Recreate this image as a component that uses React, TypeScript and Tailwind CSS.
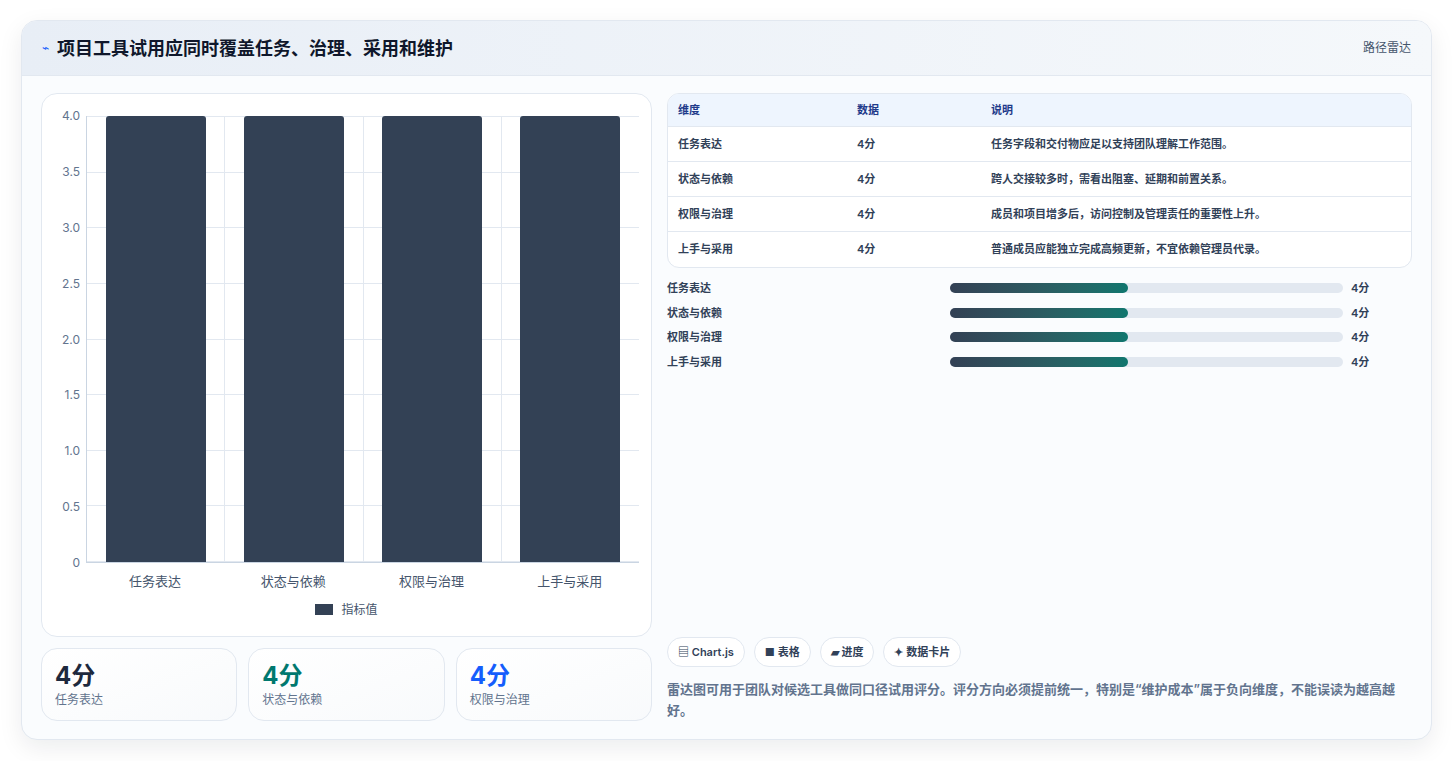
const dims = [
  { name: '任务表达', value: 4, note: '任务字段和交付物应足以支持团队理解工作范围。' },
  { name: '状态与依赖', value: 4, note: '跨人交接较多时，需看出阻塞、延期和前置关系。' },
  { name: '权限与治理', value: 4, note: '成员和项目增多后，访问控制及管理责任的重要性上升。' },
  { name: '上手与采用', value: 4, note: '普通成员应能独立完成高频更新，不宜依赖管理员代录。' },
];

const ticks = ['4.0', '3.5', '3.0', '2.5', '2.0', '1.5', '1.0', '0.5', '0'];

function BarChart() {
  return (
    <div className="flex h-[544px] flex-col rounded-2xl border border-slate-200 bg-white px-3 pt-[22px] pb-4">
      <div className="flex h-[447px]">
        <div className="flex w-[32px] flex-col justify-between text-right text-[12px] leading-none text-slate-500">
          {ticks.map((t) => (
            <span key={t} className="-my-[6px] pr-[6px]">{t}</span>
          ))}
        </div>
        <div className="relative flex-1 border-b border-l border-slate-300">
          <div className="absolute inset-0 flex flex-col justify-between">
            {ticks.map((t) => (
              <div key={t} className="h-px bg-slate-200" />
            ))}
          </div>
          <div className="absolute inset-0 flex">
            {dims.map((d, i) => (
              <div key={d.name} className={`flex flex-1 items-end justify-center ${i > 0 ? 'border-l border-slate-200' : ''}`}>
                <div className="h-full w-[100px] rounded-t-[3px] bg-[#334155]" />
              </div>
            ))}
          </div>
        </div>
      </div>
      <div className="ml-[32px] flex pt-[9px] text-[13px] text-slate-600">
        {dims.map((d) => (
          <div key={d.name} className="flex-1 text-center">{d.name}</div>
        ))}
      </div>
      <div className="mt-[9px] flex items-center justify-center gap-2 text-[12px] text-slate-600">
        <span className="h-[11px] w-[18px] bg-[#334155]" />
        指标值
      </div>
    </div>
  );
}

function Stat({ value, label, color }: { value: string; label: string; color: string }) {
  return (
    <div className="flex h-[73px] flex-1 flex-col justify-center rounded-2xl border border-slate-200 bg-gradient-to-br from-white to-slate-50 px-[13px]">
      <div className={`text-[24px] font-bold leading-tight ${color}`}>{value}</div>
      <div className="text-[12px] text-slate-500">{label}</div>
    </div>
  );
}

export default function App() {
  return (
    <div
      className="min-h-screen bg-white px-[21px] pt-[20px]"
      style={{ fontFamily: 'Inter, "Noto Sans CJK SC", sans-serif' }}
    >
      <div className="h-[720px] overflow-hidden rounded-2xl border border-slate-200 bg-[#fafcfe] shadow-[0_8px_24px_rgba(15,23,42,0.08)]">
        <div className="flex h-[55px] items-center justify-between border-b border-slate-200 bg-gradient-to-r from-[#e8eef6] to-[#f5f8fb] px-5">
          <div className="flex items-center gap-[8px]">
            <span className="text-[12px] text-blue-600">⌁</span>
            <h1 className="text-[18px] font-bold text-slate-900">项目工具试用应同时覆盖任务、治理、采用和维护</h1>
          </div>
          <span className="text-[12px] text-slate-600">路径雷达</span>
        </div>
        <div className="flex gap-[15px] px-[19px] pt-[17px]">
          <div className="flex w-[611px] flex-col gap-[11px]">
            <BarChart />
            <div className="flex gap-[11px]">
              <Stat value="4分" label="任务表达" color="text-slate-800" />
              <Stat value="4分" label="状态与依赖" color="text-teal-700" />
              <Stat value="4分" label="权限与治理" color="text-blue-600" />
            </div>
          </div>
          <div className="flex h-[628px] flex-1 flex-col">
            <div className="overflow-hidden rounded-xl border border-slate-200 bg-white text-[11px]">
              <div className="flex h-[33px] items-center border-b border-slate-200 bg-[#eef5fe] px-[10px] font-semibold text-[#1e3a8a]">
                <span className="w-[179px]">维度</span>
                <span className="w-[134px]">数据</span>
                <span>说明</span>
              </div>
              {dims.map((d, i) => (
                <div key={d.name} className={`flex h-[35px] items-center px-[10px] font-semibold text-slate-700 ${i < 3 ? 'border-b border-slate-200' : ''}`}>
                  <span className="w-[179px]">{d.name}</span>
                  <span className="w-[134px]">{d.value}分</span>
                  <span>{d.note}</span>
                </div>
              ))}
            </div>
            <div className="mt-[8px] flex flex-col">
              {dims.map((d) => (
                <div key={d.name} className="flex h-[24.5px] items-center text-[11px] font-semibold text-slate-700">
                  <span className="w-[283px]">{d.name}</span>
                  <div className="h-[10px] w-[393px] rounded-full bg-slate-200">
                    <div className="h-full rounded-full bg-gradient-to-r from-[#334155] to-[#0f766e]" style={{ width: `${(d.value / 9) * 100 + 0.9}%` }} />
                  </div>
                  <span className="ml-[8px]">{d.value}分</span>
                </div>
              ))}
            </div>
            <div className="mt-auto">
              <div className="flex gap-[9px] text-[11px] font-semibold text-slate-700">
                {['▤ Chart.js', '■ 表格', '▰ 进度', '✦ 数据卡片'].map((t) => (
                  <span key={t} className="rounded-full border border-slate-200 bg-white px-[10px] py-[6px]">{t}</span>
                ))}
              </div>
              <p className="mt-[12px] text-[13px] font-semibold leading-[21px] text-slate-500">
                雷达图可用于团队对候选工具做同口径试用评分。评分方向必须提前统一，特别是“维护成本”属于负向维度，不能误读为越高越好。
              </p>
            </div>
          </div>
        </div>
      </div>
    </div>
  );
}
